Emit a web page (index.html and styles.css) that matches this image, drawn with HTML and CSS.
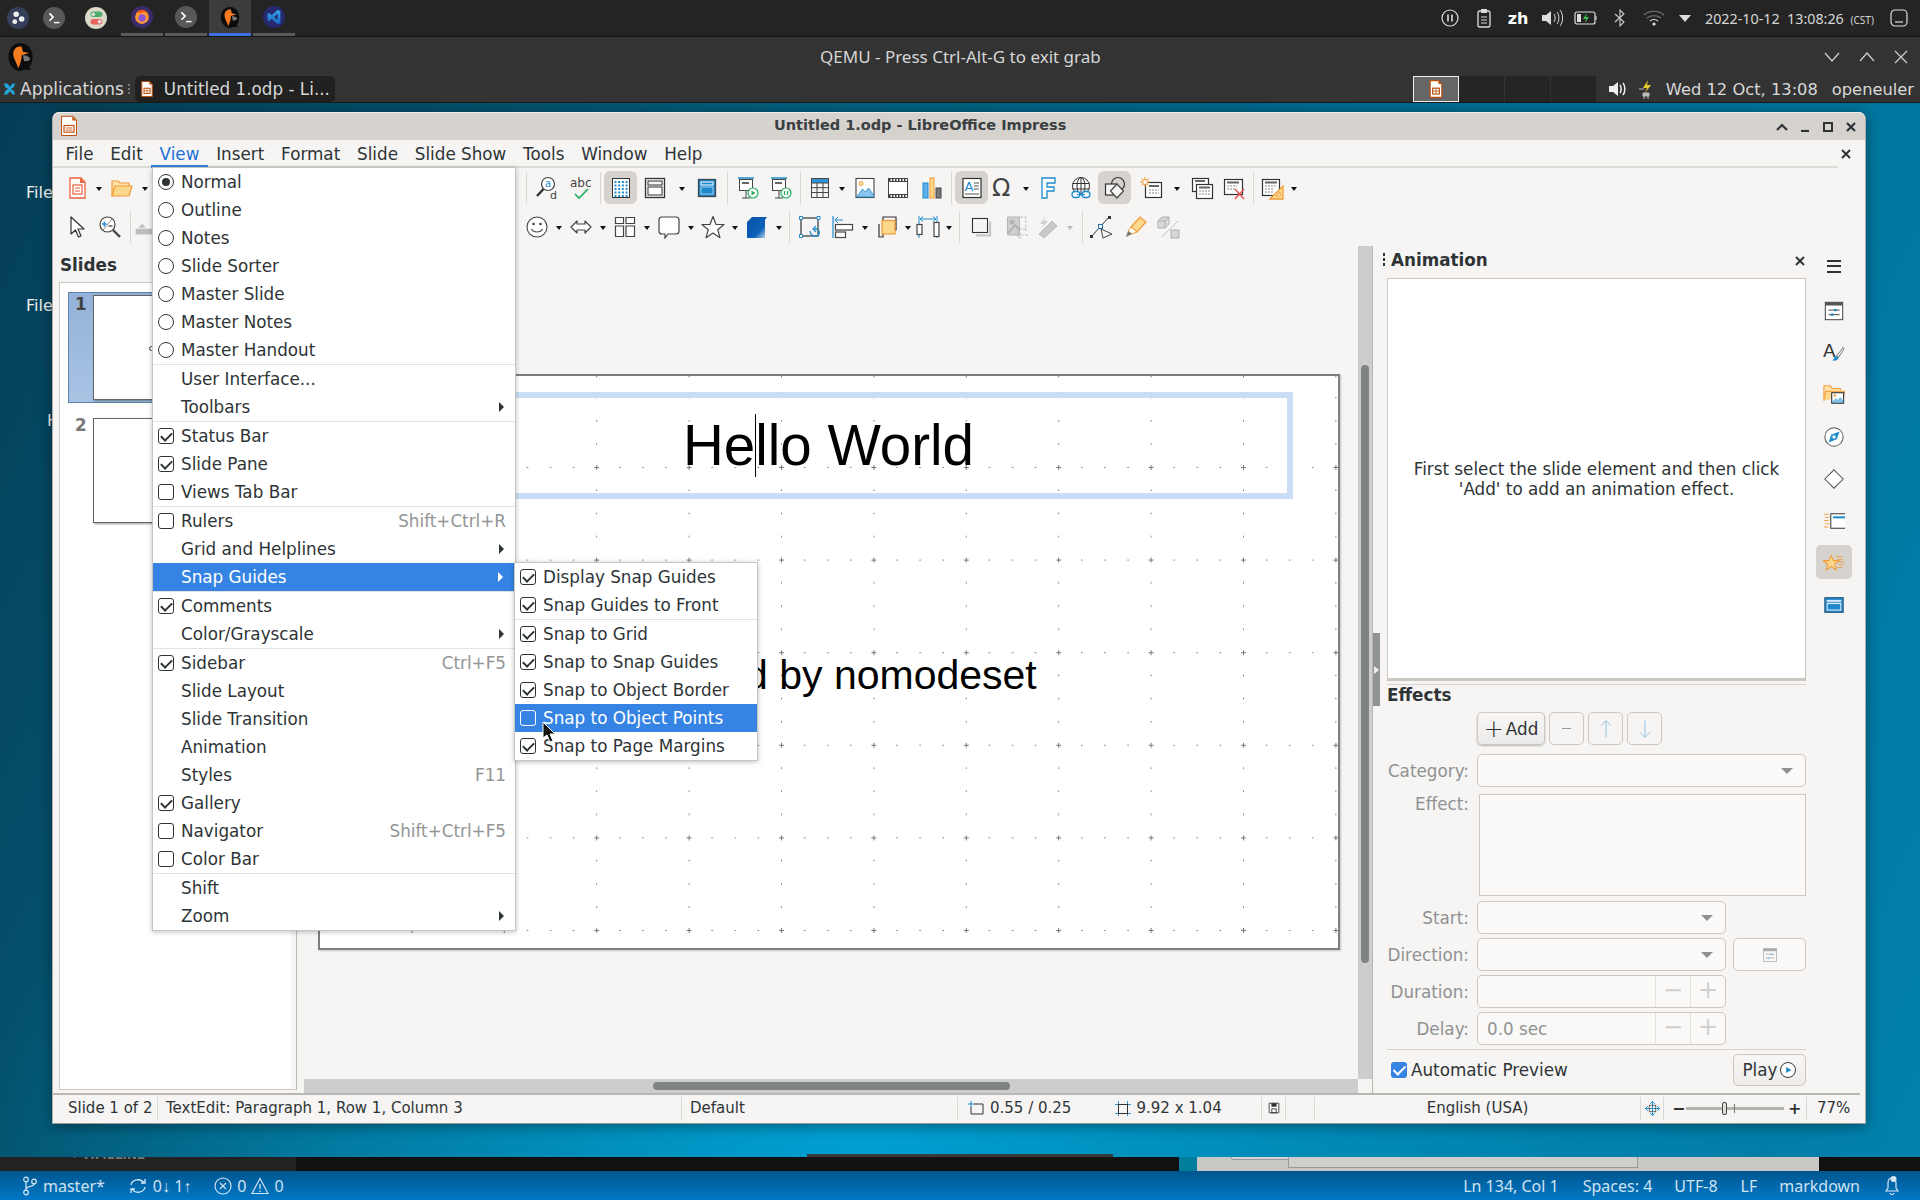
FILE: index.html
```html
<!DOCTYPE html>
<html lang="en">
<head>
<meta charset="utf-8">
<title>Untitled 1.odp - LibreOffice Impress</title>
<link rel="stylesheet" href="styles.css">
</head>
<body>

<!-- icon sprite -->
<svg class="sprite" xmlns="http://www.w3.org/2000/svg">
  <defs>
    <linearGradient id="g3d" x1="0" y1="0" x2="1" y2="1"><stop offset="0" stop-color="#0a4fa8"/><stop offset=".65" stop-color="#0d62b8"/><stop offset="1" stop-color="#cfe3f5"/></linearGradient>
    <linearGradient id="gcode" x1="0" y1="0" x2="0" y2="1"><stop offset="0" stop-color="#3aa3e8"/><stop offset="1" stop-color="#1668c4"/></linearGradient>
  </defs>
  <symbol id="qemu" viewBox="0 0 24 24"><path d="M12 1c6 0 10 5 10 11 0 4-1 7-3 9l2 2h-6l-3 1C6 24 2 18 2 12 2 6 6 1 12 1z" fill="#0c0c0c"/><path d="M13 4C9 3 6 6 6 10c0 4 3 7 4 12 2-4 3-8 3-11l6-2-5-1z" fill="#f47b20"/><path d="M14 11c3 0 5 1 6 3-1 2-3 2-5 2z" fill="#777"/></symbol>
  <symbol id="doc" viewBox="0 0 24 24"><path d="M5 2h10l4 4v16H5z" fill="#fff" stroke="#b8500f" stroke-width="1.400"/><path d="M15 2l4 4h-4z" fill="#b8500f"/><rect x="8" y="11" width="8" height="7" fill="none" stroke="#b8500f" stroke-width="1.400"/><path d="M8 14.500h8M12 11v7" stroke="#b8500f"/></symbol>
  <symbol id="doc-draw" viewBox="0 0 24 24"><path d="M3 1h14l4 4v19H3z" fill="#fff" stroke="#c0500f" stroke-width="1.200"/><path d="M16 1l5 5h-5z" fill="#c0500f"/><rect x="6" y="12" width="12" height="8" fill="none" stroke="#c0500f" stroke-width="1.400"/><path d="M8 15h8M8 17.500h8" stroke="#c0500f"/></symbol>
  <symbol id="new" viewBox="0 0 24 24"><path d="M5 2h11l4 4v16H5z" fill="#fff" stroke="#e8603c" stroke-width="1.300"/><path d="M15 2l5 5h-5z" fill="#e8603c"/><rect x="8" y="9" width="9" height="9" fill="none" stroke="#e8603c" stroke-width="1.200"/><path d="M10 12h5M10 15h5" stroke="#e8603c"/></symbol>
  <symbol id="open" viewBox="0 0 24 24"><path d="M2 20V5h6l2 2h9v3" fill="#fce3ab" stroke="#f19a38" stroke-width="1.200"/><path d="M2 20l3-10h17l-3 10z" fill="#fbd88b" stroke="#f19a38" stroke-width="1.200"/></symbol>
  <symbol id="grid" viewBox="0 0 24 24"><rect x="3.500" y="2.500" width="17" height="19" fill="#fff" stroke="#333"/><path d="M5.500 6h13M5.500 9.500h13M5.500 13h13M5.500 16.500h13M5.500 20h13" stroke="#1e8bcd" stroke-width="2" stroke-dasharray="2 1.700"/></symbol>
  <symbol id="view" viewBox="0 0 24 24"><rect x="2.500" y="2.500" width="19" height="19" fill="none" stroke="#333" stroke-width="1.300"/><rect x="5" y="5" width="14" height="4" fill="none" stroke="#333"/><rect x="5" y="11" width="14" height="8" fill="#fff" stroke="#333"/></symbol>
  <symbol id="master" viewBox="0 0 24 24"><rect x="3.500" y="3.500" width="17" height="17" fill="#1e88cd" stroke="#3a4a55" stroke-width="1.300"/><rect x="6" y="6" width="12" height="3" fill="none" stroke="#fff"/><rect x="6" y="11" width="12" height="7" fill="#1e88cd" stroke="#fff" stroke-width=".6"/></symbol>
  <symbol id="show" viewBox="0 0 24 24"><path d="M2 2h16" stroke="#1e8bcd" stroke-width="1.500"/><rect x="3.500" y="3.500" width="13" height="11" fill="#fff" stroke="#444"/><path d="M6 7h7" stroke="#666" stroke-width="2"/><path d="M10 15v7M6 22h8" stroke="#444"/><circle cx="17" cy="17" r="5" fill="#fff" stroke="#27ae60" stroke-width="1.200"/><path d="M15.500 14.500l4 2.500-4 2.500z" fill="#27ae60"/></symbol>
  <symbol id="show2" viewBox="0 0 24 24"><path d="M2 2h16" stroke="#1e8bcd" stroke-width="1.500"/><rect x="3.500" y="3.500" width="13" height="11" fill="#fff" stroke="#444"/><path d="M6 7h7" stroke="#666" stroke-width="2"/><path d="M10 15v7M6 22h8" stroke="#444"/><circle cx="17" cy="17" r="5" fill="#fff" stroke="#27ae60" stroke-width="1.200"/><path d="M15.500 15v4M18.500 15v4" stroke="#27ae60" stroke-width="1.300"/></symbol>
  <symbol id="table" viewBox="0 0 24 24"><rect x="3" y="2" width="18" height="5" fill="#2d94d8"/><path d="M3.500 2.500h17v19h-17zM3.500 7h17M3.500 11.700h17M3.500 16.500h17M9 7v15M15 7v15" fill="none" stroke="#444"/></symbol>
  <symbol id="image" viewBox="0 0 24 24"><rect x="3" y="2.500" width="18" height="19" fill="#fff" stroke="#444" stroke-width="1.100"/><circle cx="8" cy="7.500" r="2" fill="#fce3ab" stroke="#f19a38"/><path d="M3.500 21l6-8 3 3 3-4 5 7v2z" fill="#8cc3ec" stroke="#1e8bcd" stroke-width=".8"/></symbol>
  <symbol id="video" viewBox="0 0 24 24"><rect x="2.500" y="2.500" width="19" height="19" fill="#fff" stroke="#444"/><path d="M2.500 5.500h19M2.500 18.500h19" stroke="#444"/><path d="M3 4h18M3 20h18" stroke="#444" stroke-width="2" stroke-dasharray="1.500 1.500"/></symbol>
  <symbol id="chart" viewBox="0 0 24 24"><rect x="3" y="7" width="5" height="15" fill="#5eb0e8" stroke="#1e8bcd"/><rect x="10" y="2" width="4" height="20" fill="#fbd88b" stroke="#f19a38"/><rect x="16" y="12" width="5" height="10" fill="#777" stroke="#444"/></symbol>
  <symbol id="fontwork" viewBox="0 0 24 24"><path d="M5 2h13v5h-8v4h7v4h-7v7H5z" fill="#fff" stroke="#1e8bcd" stroke-width="1.300"/></symbol>
  <symbol id="link" viewBox="0 0 24 24"><circle cx="12" cy="10" r="8.500" fill="#fff" stroke="#333"/><ellipse cx="12" cy="10" rx="4" ry="8.500" fill="none" stroke="#333"/><path d="M3.500 7.500h17M3.500 13h17M12 1.500v17" stroke="#333"/><rect x="3" y="15.500" width="8" height="6" rx="3" fill="#fff" stroke="#1e8bcd" stroke-width="1.300"/><rect x="13" y="15.500" width="8" height="6" rx="3" fill="#fff" stroke="#1e8bcd" stroke-width="1.300"/><path d="M8 18.500h8" stroke="#1e8bcd" stroke-width="1.300"/></symbol>
  <symbol id="shapes" viewBox="0 0 24 24"><circle cx="15" cy="8" r="6.500" fill="none" stroke="#333" stroke-width="1.200"/><rect x="2.500" y="8" width="11" height="11" fill="#f6f5f4" stroke="#333" stroke-width="1.200"/><path d="M14 8l6.500 7-6.500 7-6.500-7z" fill="#f6f5f4" stroke="#444" stroke-width="1.200"/></symbol>
  <symbol id="newslide" viewBox="0 0 24 24"><rect x="6.500" y="6.500" width="16" height="15" fill="#fff" stroke="#333" stroke-width="1.200"/><path d="M10 10h10" stroke="#666" stroke-width="2"/><path d="M10 14h10M10 17h10" stroke="#888" stroke-dasharray="2 1"/><path d="M6 1v10M1 6h10M2.500 2.500l7 7M9.500 2.500l-7 7" stroke="#f19a38"/><circle cx="6" cy="6" r="2.500" fill="#fff" stroke="#f19a38"/></symbol>
  <symbol id="dupslide" viewBox="0 0 24 24"><rect x="2.500" y="2.500" width="16" height="13" fill="#fff" stroke="#333" stroke-width="1.200"/><path d="M5 5h10" stroke="#666" stroke-width="2"/><rect x="6.500" y="8.500" width="16" height="14" fill="#fff" stroke="#333" stroke-width="1.200"/><path d="M9 11.500h11" stroke="#666" stroke-width="2"/><path d="M9 15h11M9 18h11" stroke="#888" stroke-dasharray="2 1"/></symbol>
  <symbol id="delslide" viewBox="0 0 24 24"><rect x="2.500" y="3.500" width="18" height="15" fill="#fff" stroke="#333" stroke-width="1.200"/><path d="M5 6.500h12" stroke="#666" stroke-width="2"/><path d="M5 10h10M5 13h8" stroke="#888" stroke-dasharray="2 1"/><path d="M13 13l9 10M22 13l-9 10" stroke="#ea4f4f" stroke-width="1.400"/></symbol>
  <symbol id="layout" viewBox="0 0 24 24"><rect x="2.500" y="3.500" width="17" height="16" fill="#fff" stroke="#333" stroke-width="1.200"/><path d="M5 6.500h12" stroke="#666" stroke-width="2"/><path d="M5 10h12M5 13h8M5 16h8" stroke="#888" stroke-dasharray="2 1"/><path d="M23 10v13H10z" fill="#fbd88b" stroke="#f19a38" stroke-width="1.300"/><path d="M20 16v4h-4z" fill="#fff" stroke="#f19a38"/></symbol>
  <symbol id="arrow" viewBox="0 0 24 24"><path d="M6 2v17l4.500-4 3 7 2.500-1-3-7H19z" fill="#fff" stroke="#333" stroke-width="1.200" stroke-linejoin="round"/></symbol>
  <symbol id="zoom" viewBox="0 0 24 24"><circle cx="9.500" cy="9.500" r="7.500" fill="#fff" stroke="#444" stroke-width="1.200"/><path d="M15 15l7 7" stroke="#444" stroke-width="2.400"/><path d="M4 9h4.500M6.300 6.500v5" stroke="#1e8bcd" stroke-width="1.300"/><path d="M10.500 11h4" stroke="#444" stroke-width="1.300"/><path d="M5 15L14 4" stroke="#888"/></symbol>
  <symbol id="line" viewBox="0 0 24 24"><path d="M2 14h20v7H2zM5 13l5-5 4 5z" fill="#bdbdbd"/></symbol>
  <symbol id="smile" viewBox="0 0 24 24"><circle cx="12" cy="12" r="10" fill="#fff" stroke="#444" stroke-width="1.100"/><circle cx="8.500" cy="9" r="1.300" fill="#444"/><circle cx="15.500" cy="9" r="1.300" fill="#444"/><path d="M6.500 14c2 4 9 4 11 0" fill="none" stroke="#444" stroke-width="1.100"/></symbol>
  <symbol id="dblarrow" viewBox="0 0 24 24"><path d="M2 12l6-6v3h8V6l6 6-6 6v-3H8v3z" fill="#fff" stroke="#444" stroke-width="1.200" stroke-linejoin="round"/></symbol>
  <symbol id="blocks" viewBox="0 0 24 24"><path d="M2.500 2.500h8v6h-8zM13 2.500h8.500v6H13zM2.500 11h8v10.500h-8zM13 11h8.500v10.500H13z" fill="#fff" stroke="#444" stroke-width="1.200"/></symbol>
  <symbol id="callout" viewBox="0 0 24 24"><path d="M5 2h14c2 0 3 1 3 3v11c0 2-1 3-3 3h-8l-3 4v-4H5c-2 0-3-1-3-3V5c0-2 1-3 3-3z" fill="#fff" stroke="#444" stroke-width="1.200"/></symbol>
  <symbol id="star" viewBox="0 0 24 24"><path d="M12 1.500l3 8h8l-6.300 5.200 2.300 8-7-4.700-7 4.700 2.300-8L1 9.500h8z" fill="#fff" stroke="#444" stroke-width="1.200" stroke-linejoin="round"/></symbol>
  <symbol id="solid" viewBox="0 0 24 24"><path d="M7 2h15l-2 3v18H2V7z" fill="url(#g3d)"/></symbol>
  <symbol id="rotate" viewBox="0 0 24 24"><rect x="3" y="3" width="17" height="18" fill="none" stroke="#333" stroke-width="1.200"/><path d="M1.500 1.500h3v3h-3zM19 1.500h3v3h-3zM1.500 19.500h3v3h-3z" fill="#fff" stroke="#1e8bcd"/><path d="M12 16c0 4 4 6 7 5 3-1 3-6 0-7l-3 0" fill="none" stroke="#1e8bcd" stroke-width="1.300"/><path d="M18 11l-3 3 3 3" fill="none" stroke="#1e8bcd" stroke-width="1.200"/></symbol>
  <symbol id="align" viewBox="0 0 24 24"><path d="M3 1v22" stroke="#1e8bcd" stroke-width="1.200"/><path d="M5 5h8M5 5l3-3M5 5l3 3" fill="none" stroke="#1e8bcd"/><rect x="5.500" y="9.500" width="17" height="5.500" fill="#fff" stroke="#444" stroke-width="1.200"/><rect x="5.500" y="17" width="10" height="5.500" fill="#fff" stroke="#444" stroke-width="1.200"/></symbol>
  <symbol id="arrange" viewBox="0 0 24 24"><path d="M7 5V2h13v13h-3M7 19v3h-4V9" fill="none" stroke="#333" stroke-width="1.200"/><rect x="6" y="5.500" width="13" height="13.500" fill="#fbd88b" stroke="#f19a38" stroke-width="1.200"/></symbol>
  <symbol id="distrib" viewBox="0 0 24 24"><path d="M3 1v22M21 1v22" stroke="#1e8bcd"/><path d="M4 4h16M4 4l3-2.500M4 4l3 2.500M20 4l-3-2.500M20 4l-3 2.500" fill="none" stroke="#1e8bcd"/><rect x="1" y="9.500" width="5" height="10" fill="#fff" stroke="#444" stroke-width="1.200"/><rect x="18" y="7.500" width="5" height="14" fill="#fff" stroke="#444" stroke-width="1.200"/></symbol>
  <symbol id="shadow" viewBox="0 0 24 24"><path d="M7 20.500h14v-14" fill="none" stroke="#c4c4c4" stroke-width="2.200"/><rect x="3.500" y="3.500" width="15" height="14" fill="#f6f5f4" stroke="#333" stroke-width="1.100"/></symbol>
  <symbol id="crop" viewBox="0 0 24 24"><path d="M2.500 2h12v18h-12z" fill="#cfcfcf" stroke="#b5b5b5"/><circle cx="7" cy="7" r="2.500" fill="#b5b5b5"/><path d="M3 18l7-8 5 5" fill="none" stroke="#aaa" stroke-width="1.500"/><path d="M15 2h6v14M21 14h-8v8M11 20h12M15 24v-6" fill="none" stroke="#bbb" stroke-dasharray="3 1.500"/></symbol>
  <symbol id="brush" viewBox="0 0 24 24"><path d="M3 19L16 6l5 5-13 12z" fill="#c9c9c9" stroke="#bbb"/><path d="M9 2L4 9h4L6 13l6-7H8z" fill="#d0d0d0"/></symbol>
  <symbol id="points" viewBox="0 0 24 24"><path d="M2 22L20 2" stroke="#333"/><rect x="19" y="1" width="3" height="3" fill="#333"/><rect x="1" y="20" width="3" height="3" fill="#333"/><rect x="9.500" y="9.500" width="4" height="4" fill="#fff" stroke="#1e6fb8"/><path d="M12 14l2 9 9-4z" fill="#f6f5f4" stroke="#444"/></symbol>
  <symbol id="marker" viewBox="0 0 24 24"><path d="M8 12L17 2l6 5-9 10z" fill="#fbd88b" stroke="#f19a38" stroke-width="1.200"/><path d="M8 12l6 5-5 2-4-3z" fill="#fff" stroke="#f19a38"/><path d="M5 16l4 3-6 3z" fill="#777"/></symbol>
  <symbol id="toggle3d" viewBox="0 0 24 24"><path d="M2 6l4-4h7v7l-4 4H2z" fill="#d9d9d9" stroke="#b0b0b0"/><path d="M2 6h7v7M9 6l4-4" fill="none" stroke="#b0b0b0"/><path d="M6 22L22 6" stroke="#c0c0c0"/><rect x="15" y="15" width="8" height="8" fill="#d5d5d5" stroke="#b0b0b0"/></symbol>
  <symbol id="props" viewBox="0 0 24 24"><rect x="2.500" y="2.500" width="19" height="19" fill="#fff" stroke="#333"/><rect x="2.500" y="2.500" width="19" height="3.500" fill="#555"/><path d="M6 11h12M6 16h12" stroke="#333"/><circle cx="13.500" cy="11" r="1.500" fill="#1e8bcd"/><circle cx="10" cy="16" r="1.500" fill="#1e8bcd"/></symbol>
  <symbol id="gallery" viewBox="0 0 24 24"><path d="M1 18V2h7l2 3h9v2" fill="#fce3ab" stroke="#f19a38" stroke-width="1.100"/><path d="M1 18l2-10h21l-2 6" fill="#fbd88b" stroke="#f19a38" stroke-width="1.100"/><rect x="9.500" y="9.500" width="13" height="11.500" fill="#fff" stroke="#333" stroke-width="1.200"/><circle cx="13" cy="12.500" r="1.300" fill="#f19a38"/><path d="M10 20l4-4 2 2 3-3 3 4v1z" fill="#8cc3ec" stroke="#1e8bcd" stroke-width=".6"/></symbol>
  <symbol id="navi" viewBox="0 0 24 24"><circle cx="12" cy="12" r="10" fill="#fff" stroke="#555" stroke-width="1.100"/><path d="M18 6l-9 3.500-3 8.500 9-3.500z" fill="#1e8bcd"/><circle cx="12" cy="12" r="1.800" fill="#fff"/></symbol>
  <symbol id="diamond" viewBox="0 0 24 24"><path d="M12 2l10 10-10 10L2 12z" fill="#fff" stroke="#555" stroke-width="1.100"/></symbol>
  <symbol id="transit" viewBox="0 0 24 24"><path d="M1 4.500h5M2 8h5M1 11.500h5M2 15h5M1 18.500h5" stroke="#f19a38"/><path d="M24 4H8.500v16H24" fill="#fff" stroke="#333" stroke-width="1.100"/><path d="M11 8h13" stroke="#1e8bcd" stroke-width="2.200"/></symbol>
  <symbol id="anim" viewBox="0 0 24 24"><path d="M9 5l2.500 5.500h6l-4.700 4 1.800 6L9 17l-5.600 3.500 1.800-6-4.700-4h6z" fill="#fbd88b" stroke="#f19a38" stroke-width="1.100"/><path d="M13 6h8M15 9h7M17 12h6M17 15h6M15 18h6" stroke="#f19a38" stroke-width=".9"/></symbol>
  <symbol id="pages" viewBox="0 0 24 24"><rect x="2" y="4" width="20" height="16" fill="#1e88cd" stroke="#2b5a7d" stroke-width="1.200"/><path d="M4 7h16M4 8.500h16" stroke="#fff"/><rect x="4.500" y="10.500" width="15" height="7" fill="none" stroke="#fff"/></symbol>
  <symbol id="opts" viewBox="0 0 24 24"><rect x="3.500" y="3.500" width="17" height="17" fill="#faf9f8" stroke="#aaa"/><rect x="3.500" y="3.500" width="17" height="3.500" fill="#aaa"/><path d="M6 11h12M6 16h12" stroke="#aaa"/><circle cx="14" cy="11" r="1.500" fill="#8cc3ec"/><circle cx="10" cy="16" r="1.500" fill="#8cc3ec"/></symbol>
  <symbol id="up" viewBox="0 0 24 24"><path d="M12 2v20M6 8l6-6 6 6" fill="none" stroke="#7cbbe6"/></symbol>
  <symbol id="down" viewBox="0 0 24 24"><path d="M12 2v20M6 16l6 6 6-6" fill="none" stroke="#7cbbe6"/></symbol>
  <symbol id="play" viewBox="0 0 24 24"><circle cx="12" cy="12" r="10" fill="#fff" stroke="#333" stroke-width="1.300"/><path d="M9.500 8l7 4-7 4z" fill="#1e8bcd"/></symbol>
  <symbol id="pos" viewBox="0 0 16 16"><path d="M3 1v6M0 4h6" stroke="#1e8bcd"/><path d="M3 7v7h12V4H6" fill="none" stroke="#333"/></symbol>
  <symbol id="size" viewBox="0 0 16 16"><path d="M0 4.500h16M0 13.500h16M3.500 1v15M12.500 1v15" stroke="#1e8bcd" stroke-width=".9"/><rect x="3.500" y="4.500" width="9" height="9" fill="none" stroke="#333"/></symbol>
  <symbol id="save" viewBox="0 0 16 16"><path d="M2.500 2.500h11v11h-11z" fill="#fff" stroke="#333"/><rect x="5" y="2.500" width="6" height="4" fill="#333"/><rect x="5.500" y="9" width="5" height="4.500" fill="none" stroke="#333"/></symbol>
  <symbol id="fit" viewBox="0 0 16 16"><path d="M8 .5v15M.5 8h15M8 .5L5.500 3M8 .5L10.500 3M8 15.500L5.500 13M8 15.500l2.500-2.500M.5 8L3 5.500M.5 8L3 10.500M15.500 8L13 5.500M15.500 8L13 10.500" fill="none" stroke="#1e8bcd"/><rect x="4.500" y="4.500" width="7" height="7" fill="none" stroke="#333" stroke-width=".7"/></symbol>
</svg>

<!-- host panel -->
<div class="hostbar">
  <div class="launcher"><svg class="round" viewBox="0 0 24 24"><circle cx="12" cy="12" r="12" fill="#36405a"/><circle cx="10" cy="8" r="3" fill="#eee"/><circle cx="16" cy="13" r="3" fill="#eee"/><circle cx="8.500" cy="16" r="2.600" fill="#eee"/></svg></div>
  <div class="launcher"><svg class="round" viewBox="0 0 24 24"><circle cx="12" cy="12" r="12" fill="#585858"/><path d="M7 7l4 4-4 4" fill="none" stroke="#fff" stroke-width="1.800"/><path d="M12 17h6" stroke="#fff" stroke-width="1.500"/></svg></div>
  <div class="launcher wide"><svg class="round" viewBox="0 0 24 24"><circle cx="12" cy="12" r="12" fill="#ddd9c9"/><rect x="6" y="5" width="13" height="6" rx="3" fill="#4fae6d"/><circle cx="9" cy="8" r="2" fill="#ddd"/><rect x="6" y="13" width="13" height="6" rx="3" fill="#e5645c"/><circle cx="16" cy="16" r="2" fill="#ddd"/></svg></div>
  <div class="tab"><svg class="round" viewBox="0 0 24 24"><circle cx="12" cy="12" r="12" fill="#3a2c6a"/><circle cx="12" cy="12" r="7.500" fill="#ff9a2e"/><circle cx="12" cy="13" r="4" fill="#8d55d8"/><path d="M6 7c3-4 10-4 12 1-3-2-5-2-7 0z" fill="#f3541f"/></svg></div>
  <div class="tab"><svg class="round" viewBox="0 0 24 24"><circle cx="12" cy="12" r="12" fill="#585858"/><path d="M7 7l4 4-4 4" fill="none" stroke="#fff" stroke-width="1.800"/><path d="M12 17h6" stroke="#fff" stroke-width="1.500"/></svg></div>
  <div class="tab active"><svg class="round"><use href="#qemu"/></svg></div>
  <div class="tab"><svg class="round" viewBox="0 0 24 24"><circle cx="12" cy="12" r="12" fill="#27296e"/><path d="M16 4l3 1.500v13L16 20 9.500 14l-3 2.500-1.500-1V8.500l1.500-1 3 2.500zM16 8.500L12 12l4 3.500z" fill="url(#gcode)" fill-rule="evenodd"/></svg></div>
  <div class="tray">
    <span class="tray-item"><svg width="18" height="18" viewBox="0 0 18 18"><circle cx="9" cy="9" r="8" fill="none" stroke="#ddd" stroke-width="1.200"/><path d="M7 5.500v7M11 5.500v7" stroke="#ddd" stroke-width="1.600"/></svg></span>
    <span class="tray-item"><svg width="18" height="20" viewBox="0 0 18 20"><rect x="3" y="3" width="12" height="16" rx="2" fill="none" stroke="#ddd" stroke-width="1.300"/><rect x="6" y="1" width="6" height="4" fill="#ddd"/><path d="M6 9h6M6 12h6M6 15h6" stroke="#ddd"/></svg></span>
    <span class="tray-item zh">zh</span>
    <span class="tray-item"><svg width="22" height="18" viewBox="0 0 22 18"><path d="M1 6h4l5-4v14l-5-4H1z" fill="#ddd"/><path d="M13 5c1.500 2 1.500 6 0 8M16 3c2.500 3 2.500 9 0 12M19 1c3.500 4 3.500 12 0 16" fill="none" stroke="#ddd"/></svg></span>
    <span class="tray-item"><svg width="24" height="14" viewBox="0 0 24 14"><rect x="1" y="1" width="20" height="12" rx="2" fill="none" stroke="#ddd" stroke-width="1.200"/><path d="M22 5v4" stroke="#ddd"/><rect x="3" y="3" width="4" height="8" fill="#ddd"/><path d="M13 2l-4 6h3l-1 4 4-6h-3z" fill="#3fc24c"/></svg></span>
    <span class="tray-item"><svg width="12" height="20" viewBox="0 0 12 20"><path d="M1 6l9 8-4 4V2l4 4-9 8" fill="none" stroke="#ccc" stroke-width="1.100"/></svg></span>
    <span class="tray-item"><svg width="22" height="18" viewBox="0 0 22 18"><path d="M1 6c5-5 15-5 20 0M4 9c4-3 10-3 14 0" fill="none" stroke="#777" stroke-width="1.200"/><path d="M7 12c2-2 6-2 8 0" fill="none" stroke="#ddd" stroke-width="1.200"/><circle cx="11" cy="15" r="1.600" fill="#ddd"/></svg></span>
    <span class="tray-item caret"><i></i></span>
    <span class="clock">2022-10-12 &nbsp;13:08:26 <small>(CST)</small></span>
    <svg class="notif" width="18" height="18" viewBox="0 0 18 18"><rect x="1" y="1" width="16" height="16" rx="4" fill="none" stroke="#ddd" stroke-width="1.200"/><path d="M5 13h8" stroke="#ddd" stroke-width="1.200"/></svg>
  </div>
</div>

<!-- qemu window title -->
<div class="qemubar">
  <svg class="qemu-logo"><use href="#qemu"/></svg>
  <span class="qemu-title">QEMU - Press Ctrl-Alt-G to exit grab</span>
  <div class="qemu-btns">
    <svg width="16" height="12" viewBox="0 0 16 12"><path d="M1 2l7 8 7-8" fill="none" stroke="#d0d0d0" stroke-width="1.200"/></svg>
    <svg width="16" height="12" viewBox="0 0 16 12"><path d="M1 10l7-8 7 8" fill="none" stroke="#d0d0d0" stroke-width="1.200"/></svg>
    <svg width="14" height="14" viewBox="0 0 14 14"><path d="M1 1l12 12M13 1L1 13" stroke="#d0d0d0" stroke-width="1.200"/></svg>
  </div>
</div>

<!-- guest panel -->
<div class="guestbar">
  <span class="apps"><svg width="13" height="14" viewBox="0 0 13 14"><path d="M1 1l4 1 2 3 2-3 3-1-1 4-3 2 3 2 1 4-3-1-2-3-2 3-4 1 1-4 3-2-3-2z" fill="#22a4dc"/></svg>Applications</span>
  <span class="grip"><i></i></span>
  <span class="task"><svg width="18" height="22"><use href="#doc"/></svg>Untitled 1.odp - Li...</span>
  <div class="pager"><span class="cell current"><svg width="20" height="22"><use href="#doc"/></svg></span><span class="cell"></span><span class="cell"></span><span class="cell"></span></div>
  <svg class="gtray" width="18" height="18" viewBox="0 0 18 18"><path d="M1 6h4l5-4v14l-5-4H1z" fill="#eee"/><path d="M12 5c1.500 2 1.500 6 0 8M15 3c2.500 3 2.500 9 0 12" fill="none" stroke="#eee" stroke-width="1.500"/></svg>
  <svg class="gtray" width="18" height="20" viewBox="0 0 18 20"><path d="M11 1L6 9h4l-2 5 6-8h-4z" fill="#e8c92c"/><path d="M2 10h5M6 14h6v3H6zM7 17v3M11 17v3" stroke="#bbb" fill="#bbb"/></svg>
  <span class="gclock">Wed 12 Oct, 13:08</span>
  <span class="guser">openeuler</span>
</div>

<!-- guest desktop -->
<div class="desktop">
  <span class="deskicon first">File</span>
  <span class="deskicon second">File</span>
  <span class="deskicon third">H</span>

  <div class="window">
    <div class="titlebar">
      <svg class="title-icon" width="20" height="25"><use href="#doc-draw"/></svg>
      <span class="title-text">Untitled 1.odp - LibreOffice Impress</span>
      <div class="title-btns">
        <svg width="12" height="10" viewBox="0 0 12 10"><path d="M1 8l5-5 5 5" fill="none" stroke="#2e3436" stroke-width="2.200"/></svg>
        <svg width="12" height="10" viewBox="0 0 12 10"><path d="M2 9h8" stroke="#2e3436" stroke-width="2.200"/></svg>
        <svg width="12" height="12" viewBox="0 0 12 12"><rect x="2" y="2" width="8" height="8" fill="none" stroke="#2e3436" stroke-width="2"/></svg>
        <svg width="12" height="12" viewBox="0 0 12 12"><path d="M2 2l8 8M10 2l-8 8" stroke="#2e3436" stroke-width="2.200"/></svg>
      </div>
    </div>

    <div class="menubar">
      <span class="mitem">File</span><span class="mitem">Edit</span><span class="mitem open-item">View</span><span class="mitem">Insert</span><span class="mitem">Format</span><span class="mitem">Slide</span><span class="mitem">Slide Show</span><span class="mitem">Tools</span><span class="mitem">Window</span><span class="mitem">Help</span>
      <svg class="doc-close" width="10" height="10" viewBox="0 0 10 10"><path d="M1 1l8 8M9 1L1 9" stroke="#2e3436" stroke-width="2"/></svg>
    </div>

    <div class="toolbar">
      <span class="tb"><svg><use href="#new"/></svg></span><span class="dd"></span>
      <span class="tb w34"><svg><use href="#open"/></svg></span><span class="dd"></span>
      <span class="hidden-a"></span>
      <span class="sep w8"></span>
      <span class="tb"><svg viewBox="0 0 24 24"><circle cx="13" cy="8" r="6.500" fill="#fff" stroke="#444" stroke-width="1.200"/><path d="M8.500 13L2 20" stroke="#333" stroke-width="2.400"/><text x="10" y="11" class="ic" font-size="10" fill="#1e8bcd">a</text><text x="15" y="23" class="ic" font-size="11" fill="#444">d</text></svg></span>
      <span class="tb"><svg viewBox="0 0 24 24"><text x="2" y="11" class="ic" font-size="12" fill="#444">abc</text><path d="M7 18l4 4 9-9" fill="none" stroke="#27ae60" stroke-width="1.700"/></svg></span>
      <span class="sep w8"></span>
      <span class="tb on"><svg><use href="#grid"/></svg></span>
      <span class="tb w36"><svg><use href="#view"/></svg></span><span class="dd w17"></span>
      <span class="tb"><svg><use href="#master"/></svg></span>
      <span class="sep w8"></span>
      <span class="tb"><svg><use href="#show"/></svg></span>
      <span class="tb"><svg><use href="#show2"/></svg></span>
      <span class="sep w6"></span>
      <span class="tb"><svg><use href="#table"/></svg></span><span class="dd"></span>
      <span class="tb"><svg><use href="#image"/></svg></span>
      <span class="tb w34"><svg><use href="#video"/></svg></span>
      <span class="tb"><svg><use href="#chart"/></svg></span>
      <span class="sep w7"></span>
      <span class="tb on"><svg viewBox="0 0 24 24"><rect x="3" y="2.500" width="18" height="19" fill="#fff" stroke="#333" stroke-width="1.200"/><text x="4.500" y="15" class="ic" font-size="13" fill="#1e8bcd">A</text><path d="M14 7h5M14 10h5M14 13h5M5 18h14" stroke="#555"/></svg></span>
      <span class="tb w29"><svg viewBox="0 0 24 24"><text x="1" y="20" class="ic" font-size="24" fill="#444">Ω</text></svg></span><span class="dd w17"></span>
      <span class="tb w30"><svg><use href="#fontwork"/></svg></span>
      <span class="tb w34"><svg><use href="#link"/></svg></span>
      <span class="tb on"><svg><use href="#shapes"/></svg></span>
      <span class="tb w40"><svg><use href="#newslide"/></svg></span><span class="dd"></span>
      <span class="tb w38"><svg><use href="#dupslide"/></svg></span>
      <span class="tb w26"><svg><use href="#delslide"/></svg></span>
      <span class="sep w12"></span>
      <span class="tb w26"><svg><use href="#layout"/></svg></span><span class="dd w18"></span>
    </div>
    <div class="toolbar">
      <span class="tb"><svg><use href="#arrow"/></svg></span>
      <span class="tb"><svg><use href="#zoom"/></svg></span>
      <span class="sep w8"></span>
      <span class="tb w20"><svg><use href="#line"/></svg></span>
      <span class="hidden-b"></span>
      <span class="tb w32"><svg><use href="#smile"/></svg></span><span class="dd"></span>
      <span class="tb w32"><svg><use href="#dblarrow"/></svg></span><span class="dd"></span>
      <span class="tb w32"><svg><use href="#blocks"/></svg></span><span class="dd"></span>
      <span class="tb w32"><svg><use href="#callout"/></svg></span><span class="dd"></span>
      <span class="tb w32"><svg><use href="#star"/></svg></span><span class="dd"></span>
      <span class="tb w32"><svg><use href="#solid"/></svg></span><span class="dd"></span>
      <span class="sep w8"></span>
      <span class="tb"><svg><use href="#rotate"/></svg></span>
      <span class="tb w31"><svg><use href="#align"/></svg></span><span class="dd w16"></span>
      <span class="tb w29"><svg><use href="#arrange"/></svg></span><span class="dd"></span>
      <span class="tb w28"><svg><use href="#distrib"/></svg></span><span class="dd w14"></span>
      <span class="sep w6"></span>
      <span class="tb w38"><svg><use href="#shadow"/></svg></span>
      <span class="tb w34"><svg><use href="#crop"/></svg></span>
      <span class="tb w28"><svg><use href="#brush"/></svg></span><span class="dd w16 off"></span>
      <span class="sep w8"></span>
      <span class="tb w30"><svg><use href="#points"/></svg></span>
      <span class="tb w38"><svg><use href="#marker"/></svg></span>
      <span class="tb w28"><svg><use href="#toggle3d"/></svg></span>
    </div>

    <div class="workspace">
      <aside class="slidepane">
        <h3 class="pane-head">Slides</h3>
        <div class="slidelist">
          <div class="thumb-row selected"><b>1</b><div class="thumb"><i class="handle"></i></div></div>
          <div class="thumb-row"><b>2</b><div class="thumb"></div></div>
        </div>
      </aside>

      <main class="editor">
        <div class="canvas">
          <div class="slide">
            <svg class="gridlayer" width="1018" height="571">
              <defs>
                <pattern id="dots" x="-3" y="-3.600" width="92.400" height="92.600" patternUnits="userSpaceOnUse">
                  <path d="M0 2.500h5M2.500 0v5" stroke="#777" stroke-width="1"/>
                  <path d="M25 2.500h1.200M48.100 2.500h1.200M71.200 2.500h1.200M2 25.300h1M2 48.400h1M2 71.600h1" stroke="#555" stroke-width="1.200"/>
                </pattern>
              </defs>
              <rect width="1018" height="571" fill="url(#dots)"/>
            </svg>
            <div class="titleframe"></div>
            <div class="slide-title">Hello World</div>
            <i class="caret-line"></i>
            <div class="slide-body">d by nomodeset</div>
          </div>
        </div>
        <div class="hscroll"><span class="hthumb"></span></div>
      </main>

      <div class="vscroll"><span class="vthumb"></span></div>

      <aside class="sidebar">
        <span class="sash"><i></i></span>
        <div class="deck">
          <div class="deck-head"><span class="grip-dots"><i></i><i></i><i></i></span><b>Animation</b><svg width="10" height="10" viewBox="0 0 10 10"><path d="M1 1l8 8M9 1L1 9" stroke="#2e3436" stroke-width="2"/></svg></div>
          <div class="anim-list"><p>First select the slide element and then click<br>'Add' to add an animation effect.</p></div>
          <div class="rule"></div>
          <h4 class="effects">Effects</h4>
          <div class="ctrl-row btn-row">
            <span class="btn add"><span class="plus">+</span>Add</span>
            <span class="btn small"><span class="minus"></span></span>
            <span class="btn small"><svg width="20" height="20"><use href="#up"/></svg></span>
            <span class="btn small"><svg width="20" height="20"><use href="#down"/></svg></span>
          </div>
          <div class="ctrl-row cat-row"><label>Category:</label><span class="combo full"><i></i></span></div>
          <div class="ctrl-row eff-row"><label>Effect:</label><span class="listbox"></span></div>
          <div class="ctrl-row start-row"><label>Start:</label><span class="combo"><i></i></span></div>
          <div class="ctrl-row dir-row"><label>Direction:</label><span class="combo"><i></i></span><span class="btn opts"><svg width="18" height="18"><use href="#opts"/></svg></span></div>
          <div class="ctrl-row dur-row"><label>Duration:</label><span class="spin"><span class="spin-val"></span><span class="spin-btn">−</span><span class="spin-btn">+</span></span></div>
          <div class="ctrl-row dur-row"><label>Delay:</label><span class="spin"><span class="spin-val">0.0 sec</span><span class="spin-btn">−</span><span class="spin-btn">+</span></span></div>
          <div class="rule foot-rule"></div>
          <div class="deck-foot"><span class="tick"></span><span class="foot-label">Automatic Preview</span><span class="btn playbtn">Play<svg width="18" height="18"><use href="#play"/></svg></span></div>
        </div>
        <div class="tabbar">
          <span class="tab-item burger"><i></i><i></i><i></i></span>
          <span class="tab-item"><svg><use href="#props"/></svg></span>
          <span class="tab-item"><svg viewBox="0 0 24 24"><text x="0" y="16" class="ic" font-size="20" fill="#333">A</text><path d="M22 6l-7 9 2 1.500 6-9z" fill="#fff" stroke="#444" stroke-width=".8"/><path d="M14 15c-2 1-1 4-4 5 3 1 7 0 7-3z" fill="#1e8bcd"/></svg></span>
          <span class="tab-item"><svg><use href="#gallery"/></svg></span>
          <span class="tab-item"><svg><use href="#navi"/></svg></span>
          <span class="tab-item"><svg><use href="#diamond"/></svg></span>
          <span class="tab-item"><svg><use href="#transit"/></svg></span>
          <span class="tab-item current"><svg><use href="#anim"/></svg></span>
          <span class="tab-item"><svg><use href="#pages"/></svg></span>
        </div>
      </aside>
    </div>

    <footer class="statusbar">
      <span class="st st1">Slide 1 of 2</span>
      <span class="st st2">TextEdit: Paragraph 1, Row 1, Column 3</span>
      <span class="st st3">Default</span>
      <span class="st st4"><span class="geo"><svg width="16" height="16"><use href="#pos"/></svg>0.55 / 0.25</span><span class="geo"><svg width="16" height="16"><use href="#size"/></svg>9.92 x 1.04</span></span>
      <span class="st st5"><svg width="14" height="14"><use href="#save"/></svg></span>
      <span class="st st6"></span>
      <span class="st st7">English (USA)</span>
      <span class="st st8"><svg width="15" height="15"><use href="#fit"/></svg></span>
      <span class="st st9"><span class="zm">−</span><span class="slider"><i class="notch"></i><i class="knob"></i></span><span class="zm">+</span></span>
      <span class="st st10">77%</span>
    </footer>
  </div>
</div>

<!-- strip of the editor behind the vm -->
<div class="strip">
  <div class="strip-side"><span class="timeline">› TIMELINE</span></div>
  <div class="strip-dark"></div>
  <div class="strip-teal"></div>
  <div class="strip-shot"><i class="shot-a"></i><i class="shot-b"></i></div>
  <div class="strip-end"></div>
</div>
<i class="strip-tab"></i>

<footer class="codebar">
  <span class="cb-left">
    <svg width="16" height="20" viewBox="0 0 16 20"><circle cx="4" cy="3.500" r="2.300" fill="none" stroke="#d6e8f5" stroke-width="1.200"/><circle cx="4" cy="16.500" r="2.300" fill="none" stroke="#d6e8f5" stroke-width="1.200"/><circle cx="12" cy="5.500" r="2.300" fill="none" stroke="#d6e8f5" stroke-width="1.200"/><path d="M4 6v8M4 13c0-3 8-2 8-5" fill="none" stroke="#d6e8f5" stroke-width="1.200"/></svg>
    <span class="cb-branch">master*</span>
    <svg width="20" height="20" viewBox="0 0 20 20"><path d="M3 9c1-6 10-7 13-2M17 11c-1 6-10 7-13 2" fill="none" stroke="#d6e8f5" stroke-width="1.300"/><path d="M13 7h4V3M7 13H3v4" fill="none" stroke="#d6e8f5" stroke-width="1.300"/></svg>
    <span class="cb-sync">0↓ 1↑</span>
    <svg width="18" height="18" viewBox="0 0 18 18"><circle cx="9" cy="9" r="8" fill="none" stroke="#d6e8f5" stroke-width="1.100"/><path d="M6 6l6 6M12 6l-6 6" stroke="#d6e8f5" stroke-width="1.100"/></svg>
    <span>0</span>
    <svg width="18" height="18" viewBox="0 0 18 18"><path d="M9 1.500l8 15H1z" fill="none" stroke="#d6e8f5" stroke-width="1.100"/><path d="M9 7v5M9 13.500v1.500" stroke="#d6e8f5" stroke-width="1.300"/></svg>
    <span>0</span>
  </span>
  <span class="cb-right">
    <span class="cb-ln">Ln 134, Col 1</span>
    <span class="cb-sp">Spaces: 4</span>
    <span class="cb-enc">UTF-8</span>
    <span class="cb-eol">LF</span>
    <span class="cb-lang">markdown</span>
    <svg width="16" height="22" viewBox="0 0 16 22"><path d="M8 3c-3 0-4 2-4 5v5l-2 3h12l-2-3V8c0-3-1-5-4-5zM6 18c0 2 4 2 4 0" fill="none" stroke="#d6e8f5" stroke-width="1.200"/><circle cx="9.500" cy="4" r="3" fill="#d6e8f5"/></svg>
  </span>
</footer>

<!-- open menus -->
<div class="menu viewmenu">
  <div class="row"><span class="radio on"></span>Normal</div>
  <div class="row"><span class="radio"></span>Outline</div>
  <div class="row"><span class="radio"></span>Notes</div>
  <div class="row"><span class="radio"></span>Slide Sorter</div>
  <div class="row"><span class="radio"></span>Master Slide</div>
  <div class="row"><span class="radio"></span>Master Notes</div>
  <div class="row"><span class="radio"></span>Master Handout</div>
  <hr>
  <div class="row"><span class="nomark"></span>User Interface...</div>
  <div class="row"><span class="nomark"></span>Toolbars<i class="sub"></i></div>
  <hr>
  <div class="row"><span class="check on"></span>Status Bar</div>
  <div class="row"><span class="check on"></span>Slide Pane</div>
  <div class="row"><span class="check"></span>Views Tab Bar</div>
  <hr>
  <div class="row"><span class="check"></span>Rulers<em>Shift+Ctrl+R</em></div>
  <div class="row"><span class="nomark"></span>Grid and Helplines<i class="sub"></i></div>
  <div class="row hot"><span class="nomark"></span>Snap Guides<i class="sub"></i></div>
  <hr>
  <div class="row"><span class="check on"></span>Comments</div>
  <div class="row"><span class="nomark"></span>Color/Grayscale<i class="sub"></i></div>
  <hr>
  <div class="row"><span class="check on"></span>Sidebar<em>Ctrl+F5</em></div>
  <div class="row"><span class="nomark"></span>Slide Layout</div>
  <div class="row"><span class="nomark"></span>Slide Transition</div>
  <div class="row"><span class="nomark"></span>Animation</div>
  <div class="row"><span class="nomark"></span>Styles<em>F11</em></div>
  <div class="row"><span class="check on"></span>Gallery</div>
  <div class="row"><span class="check"></span>Navigator<em>Shift+Ctrl+F5</em></div>
  <div class="row"><span class="check"></span>Color Bar</div>
  <hr>
  <div class="row"><span class="nomark"></span>Shift</div>
  <div class="row"><span class="nomark"></span>Zoom<i class="sub"></i></div>
</div>

<div class="menu snapmenu">
  <div class="row"><span class="check on"></span>Display Snap Guides</div>
  <div class="row"><span class="check on"></span>Snap Guides to Front</div>
  <hr>
  <div class="row"><span class="check on"></span>Snap to Grid</div>
  <div class="row"><span class="check on"></span>Snap to Snap Guides</div>
  <div class="row"><span class="check on"></span>Snap to Object Border</div>
  <div class="row hot"><span class="check"></span>Snap to Object Points</div>
  <div class="row"><span class="check on"></span>Snap to Page Margins</div>
</div>

<svg class="pointer" width="14" height="22" viewBox="0 0 14 22"><path d="M1 1v16l4-3 3 7 3-1-3-7h5z" fill="#111" stroke="#fff" stroke-width="1"/></svg>

</body>
</html>
```

FILE: styles.css
```css
* {box-sizing:border-box;}
html, body {margin:0;padding:0;}
body {position:relative;width:1920px;height:1200px;overflow:hidden;display:flex;flex-direction:column;
	font-family:"DejaVu Sans",sans-serif;font-size:16.8px;color:#2e3436;background:#111;}
.sprite {position:absolute;width:0;height:0;overflow:hidden;}
.ic {font-family:"DejaVu Sans",sans-serif;}

/* host panel */
.hostbar {height:37px;flex:none;display:flex;background:#242424;border-bottom:1px solid #141414;}
.launcher {width:36px;display:flex;align-items:center;justify-content:center;}
.launcher.wide {width:48px;margin-right:1px;}
.round {width:22px;height:22px;}
.tab {width:42px;margin-right:2px;height:36px;display:flex;align-items:center;justify-content:center;border-bottom:3px solid #5a5a5a;}
.tab.active {background:#3c3c3c;border-bottom-color:#3f6fe0;}
.tray {margin-left:auto;display:flex;align-items:center;padding-right:12px;color:#d8d8d8;}
.tray-item {width:34px;display:flex;justify-content:center;align-items:center;}
.tray-item.zh {font-weight:bold;font-size:16px;color:#fff;}
.caret {width:28px;}
.caret i {border:solid transparent;border-width:7px 6px 0;border-top-color:#ddd;}
.clock {width:188px;padding-left:6px;font-family:"Noto Sans",sans-serif;font-size:14.3px;white-space:nowrap;}
.clock small {font-size:10px;margin-left:3px;}
.notif {margin-left:3px;}

/* qemu title */
.qemubar {height:39px;flex:none;display:flex;align-items:center;background:#333;color:#d6d6d6;padding:0 8px 0 6px;}
.qemu-logo {width:29px;height:29px;flex:none;}
.qemu-title {margin-left:785px;font-family:"Noto Sans",sans-serif;font-size:17px;white-space:nowrap;}
.qemu-btns {margin-left:auto;display:flex;align-items:center;gap:19px;padding-right:4px;}

/* guest panel */
.guestbar {height:27px;flex:none;display:flex;align-items:center;background:#333;color:#d8d8d8;border-bottom:1px solid #1a1a1a;}
.apps {display:flex;align-items:center;gap:4px;padding-left:3px;font-size:17px;}
.grip {width:11px;display:flex;justify-content:center;}
.grip i {width:2px;height:10px;background:repeating-linear-gradient(#777 0 2px,transparent 2px 4px);}
.task {display:flex;align-items:center;gap:8px;width:200px;height:26px;padding-left:3px;background:#212121;border-radius:5px;white-space:nowrap;}
.pager {display:flex;margin-left:1078px;height:26px;}
.cell {width:46px;background:#252525;border-right:1px solid #333;}
.cell.current {background:#666;border:1px solid #eee;display:flex;align-items:center;justify-content:center;}
.gtray {margin-left:11px;}
.gclock {margin-left:11px;font-size:16.3px;white-space:nowrap;}
.guser {margin-left:14px;font-size:16.3px;}

/* desktop */
.desktop {flex:1;position:relative;padding:9px 0 0 52px;
	background:radial-gradient(ellipse 900px 500px at 45% 100%,#00a0d2 0%,rgba(0,160,210,0) 100%),
		linear-gradient(115deg,#053e56 0%,#03607f 35%,#006f96 65%,#0181ac 100%);}
.deskicon {position:absolute;color:#eee;font-size:16px;left:26px;}
.deskicon.first {top:80px;}
.deskicon.second {top:193px;}
.deskicon.third {top:308px;left:47px;}

.window {width:1814px;height:1012px;display:flex;flex-direction:column;background:#f6f5f4;border-radius:7px 7px 0 0;
	box-shadow:0 2px 14px rgba(0,0,0,.4);position:relative;border-left:1px solid #b0aeab;border-right:1px solid #b0aeab;border-bottom:1px solid #999;}
.titlebar {height:28px;flex:none;display:flex;align-items:center;background:#d6d2ce;border-radius:7px 7px 0 0;border-top:1px solid #eee;padding-left:6px;}
.title-icon {margin-top:-2px;}
.title-text {position:absolute;left:721px;top:5px;font-weight:bold;font-size:14.5px;color:#3a3f42;}
.title-btns {margin-left:auto;display:flex;align-items:center;gap:11px;padding-right:8px;}

.menubar {height:28px;flex:none;display:flex;align-items:center;padding:0 14px 0 4px;
	background:linear-gradient(#dcdad7,#dcdad7) left bottom/calc(100% - 27px) 2px no-repeat;}
.mitem {padding:0 8.4px;height:28px;line-height:28px;white-space:nowrap;}
.mitem.open-item {color:#1c71d8;border-bottom:3px solid #3584e4;}
.doc-close {margin-left:auto;}

/* toolbars */
.toolbar {height:39px;flex:none;display:flex;align-items:center;padding-left:7px;}
.tb {width:33px;height:33px;flex:none;display:flex;align-items:center;justify-content:center;border-radius:6px;}
.tb svg {width:24px;height:24px;}
.tb.on {background:#d6d2ce;}
.dd {width:12px;height:33px;flex:none;display:flex;align-items:center;justify-content:center;}
.dd::after {content:"";border:solid transparent;border-width:4px 3.5px 0;border-top-color:#111;margin-top:2px;}
.dd.off::after {border-top-color:#bbb;}
.sep {height:32px;flex:none;display:flex;justify-content:center;}
.sep::after {content:"";width:1px;background:#d9d7d4;}
.w6 {width:6px;}
.w7 {width:7px;}
.w8 {width:8px;}
.w12 {width:12px;}
.w14 {width:14px;}
.w16 {width:16px;}
.w17 {width:17px;}
.w18 {width:18px;}
.w20 {width:20px;}
.w26 {width:26px;}
.w28 {width:28px;}
.w29 {width:29px;}
.w30 {width:30px;}
.w31 {width:31px;}
.w32 {width:32px;}
.w34 {width:34px;}
.w36 {width:36px;}
.w38 {width:38px;}
.w40 {width:40px;}
.hidden-a {width:371px;flex:none;}
.hidden-b {width:367px;flex:none;}

/* main area */
.workspace {flex:1;min-height:0;display:flex;}
.slidepane {width:244px;flex:none;display:flex;flex-direction:column;}
.pane-head {margin:0;height:36px;font-size:16.8px;line-height:38px;padding-left:7px;color:#2e3436;}
.slidelist {flex:1;margin:0 0 3px 6px;background:#fff;border:1px solid #cdc7c2;border-right:1px solid #b9b7b4;box-shadow:inset -5px 0 0 #f6f5f4;padding:9px 0 0 8px;}
.thumb-row {position:relative;height:111px;width:210px;margin-bottom:12px;padding:3px 0 0 25px;}
.thumb-row b {position:absolute;left:7px;top:0;color:#777;font-size:16.8px;}
.thumb-row.selected {background:linear-gradient(#94b2d8,#a8c3e4);border:1px solid #5d83b0;padding:2px 0 0 24px;}
.thumb-row.selected b {color:#444;left:6px;top:1px;}
.thumb {width:170px;height:105px;background:#fff;border:1px solid #666;box-shadow:1px 1px 2px rgba(0,0,0,.4);position:relative;}
.handle {position:absolute;left:55px;top:50px;width:5px;height:5px;border:1px solid #444;border-radius:50%;}

.editor {width:1061px;flex:none;display:flex;flex-direction:column;}
.canvas {flex:1;min-height:0;padding:128px 0 0 21px;overflow:hidden;}
.slide {width:1022px;height:576px;position:relative;background:#fff;border:2px solid #7e7e7e;box-shadow:1px 1px 2px rgba(0,0,0,.2);}
.gridlayer {position:absolute;left:0;top:0;}
.titleframe {position:absolute;left:60px;top:16px;width:913px;height:107px;border:6px solid #c9def5;}
.slide-title {position:absolute;left:363px;top:38px;font:56.5px/64px "Liberation Sans",sans-serif;color:#000;white-space:nowrap;}
.caret-line {position:absolute;left:435px;top:38px;width:1px;height:63px;background:#000;}
.slide-body {position:absolute;left:425px;top:275px;font:41px/48px "Liberation Sans",sans-serif;color:#000;white-space:nowrap;}
.hscroll {height:14px;flex:none;margin-left:7px;background:#cdcdcd;padding-top:3px;}
.hthumb {display:block;margin-left:349px;width:357px;height:8px;border-radius:4px;background:#7f8384;}
.vscroll {width:14px;flex:none;background:#cdcdcd;margin-bottom:14px;padding:119px 0 0 3px;}
.vthumb {display:block;width:8px;height:598px;border-radius:4px;background:#7f8384;}

/* sidebar */
.sidebar {flex:1;min-width:0;display:flex;position:relative;border-left:1px solid #b9b7b4;}
.sash {position:absolute;left:0;top:387px;width:7px;height:73px;background:#8f9393;display:flex;align-items:center;justify-content:center;}
.sash i {border:solid transparent;border-width:4px 0 4px 5px;border-left-color:#eee;}
.deck {width:419px;margin-left:14px;flex:none;}
.deck-head {height:32px;display:flex;align-items:center;font-size:16.8px;margin-left:-4px;padding-bottom:5px;}
.grip-dots {width:8px;display:flex;flex-direction:column;gap:2px;}
.grip-dots i {display:block;width:2px;height:3px;background:#2e3436;}
.deck-head svg {margin-left:auto;margin-right:1px;margin-top:2px;}
.anim-list {height:403px;background:#fff;border:1px solid #cdc7c2;border-bottom-width:3px;display:flex;align-items:center;justify-content:center;text-align:center;}
.anim-list p {margin:0;line-height:20px;}
.rule {height:1px;background:#d5d2ce;margin-top:3px;}
.effects {margin:0;height:27px;line-height:20px;font-size:16.8px;}
.ctrl-row {display:flex;align-items:center;}
.ctrl-row label {width:82px;flex:none;text-align:right;color:#8f9292;margin-right:8px;}
.btn {height:33px;border:1px solid #cdc7c2;border-radius:5px;background:#f6f5f4;display:flex;align-items:center;justify-content:center;flex:none;}
.btn-row {padding-left:90px;gap:4px;height:33px;}
.btn.add {width:68px;background:linear-gradient(#f8f7f6,#edebe9);box-shadow:0 1px 2px rgba(0,0,0,.25);}
.plus {font-size:24px;font-weight:200;line-height:24px;margin-right:2px;}
.btn.small {width:35px;}
.minus {width:9px;height:1px;background:#999;}
.cat-row {height:33px;margin-top:9px;}
.combo {width:249px;height:33px;border:1px solid #cdc7c2;border-radius:5px;background:#faf9f8;display:flex;align-items:center;justify-content:flex-end;padding-right:12px;flex:none;}
.combo.full {width:329px;}
.combo i {border:solid transparent;border-width:6px 6px 0;border-top-color:#8f9292;}
.eff-row {height:102px;margin-top:7px;align-items:flex-start;}
.eff-row label {line-height:20px;}
.listbox {display:block;margin-left:2px;width:327px;height:102px;background:#faf9f8;border:1px solid #cdc7c2;}
.start-row {height:33px;margin-top:5px;}
.dir-row {height:33px;margin-top:4px;}
.dur-row {height:33px;margin-top:4px;}
.btn.opts {width:73px;margin-left:7px;background:#faf9f8;}
.spin {width:249px;height:33px;border:1px solid #cdc7c2;border-radius:5px;background:#faf9f8;display:flex;flex:none;}
.spin-val {flex:1;padding-left:9px;line-height:32px;color:#8f9292;}
.spin-btn {width:35px;border-left:1px solid #e4e2df;text-align:center;font-size:24px;line-height:28px;color:#d0cfcd;}
.foot-rule {margin-top:4px;}
.deck-foot {display:flex;align-items:center;height:32px;margin-top:4px;padding-left:4px;}
.tick {width:16px;height:16px;border-radius:3px;background:#3584e4;position:relative;flex:none;}
.tick::after {content:"";position:absolute;left:5px;top:1px;width:5px;height:10px;border:solid #fff;border-width:0 2.5px 2.5px 0;transform:rotate(45deg);}
.foot-label {margin-left:4px;}
.btn.playbtn {margin-left:auto;width:73px;height:32px;background:linear-gradient(#f8f7f6,#eeecea);gap:1px;}
.tabbar {width:36px;margin-left:10px;flex:none;display:flex;flex-direction:column;align-items:center;}
.tab-item {height:42px;width:36px;display:flex;align-items:center;justify-content:center;flex:none;}
.tab-item svg {width:22px;height:22px;}
.tab-item.current {height:34px;margin:3px 0 5px;background:#d6d2ce;border-radius:5px;}
.tab-item.burger {flex-direction:column;gap:3.5px;height:43.5px;padding-bottom:3px;}
.burger i {display:block;width:14px;height:2px;background:#2e3436;}

/* libreoffice status */
.statusbar {height:30px;flex:none;display:flex;align-items:center;font-size:15px;border-top:2px solid #b9b7b4;margin-right:5px;padding-bottom:2px;}
.st {height:23px;display:flex;align-items:center;border-right:1px solid #d9d7d4;white-space:nowrap;flex:none;}
.st1 {width:105px;padding-left:15px;}
.st2 {width:524px;padding-left:8px;}
.st3 {width:276px;padding-left:8px;}
.st4 {width:304px;padding-left:10px;}
.geo {width:148px;display:flex;align-items:center;gap:6px;}
.st5 {width:24px;justify-content:center;}
.st6 {width:29px;}
.st7 {width:326px;justify-content:center;}
.st8 {width:23px;justify-content:center;}
.st9 {width:143px;padding-left:8px;gap:4px;}
.st10 {border-right:none;padding-left:10px;}
.zm {font-weight:bold;font-size:16px;width:10px;text-align:center;}
.slider {width:98px;height:3px;background:#b5b3b0;position:relative;display:block;}
.knob {position:absolute;left:36px;top:-5px;width:5px;height:13px;border:1px solid #444;background:#e0dedb;border-radius:2px;}
.notch {position:absolute;left:48px;top:-3px;width:1px;height:9px;background:#777;}

/* bottom of the vm host */
.strip {height:14px;flex:none;display:flex;overflow:hidden;}
.strip-side {width:296px;background:#222;color:#777;font-size:12px;font-weight:bold;padding-left:73px;line-height:1;}
.timeline {display:block;margin-top:-8px;}
.strip-dark {width:883px;background:#111;}
.strip-teal {width:18px;background:#007f9c;}
.strip-shot {width:622px;background:#c9c8c5;position:relative;}
.shot-a {position:absolute;left:34px;top:-6px;width:125px;height:9px;border:1px solid #999;border-radius:2px;background:#d6d5d2;}
.shot-b {position:absolute;left:91px;top:-4px;width:350px;height:15px;border:1px solid #999;background:#cfcecb;}
.strip-end {flex:1;background:#111;}
.strip-tab {position:absolute;left:807px;top:1154px;width:306px;height:3px;background:#3a3a3a;}

.codebar {height:29px;flex:none;display:flex;align-items:center;justify-content:space-between;font-family:"Noto Sans",sans-serif;font-size:16px;color:#d0e2f0;
	background:linear-gradient(#00568f,#0078c6);}
.cb-left {display:flex;align-items:center;gap:5px;padding-left:22px;}
.cb-branch {margin-right:18px;}
.cb-sync {margin-right:18px;}
.cb-right {display:flex;align-items:center;padding-right:20px;}
.cb-ln {margin-right:24px;}
.cb-sp {margin-right:22px;}
.cb-enc {margin-right:23px;}
.cb-eol {margin-right:22px;}
.cb-lang {margin-right:24px;}

/* popup menus */
.menu {position:absolute;background:#fff;border:1px solid #c7c5c2;box-shadow:0 1px 5px rgba(0,0,0,.25);}
.viewmenu {left:152px;top:167px;width:364px;height:764px;}
.snapmenu {left:514px;top:562px;width:244px;height:199px;}
.menu hr {margin:0;border:0;height:1px;background:#e4e3e1;}
.row {height:28px;display:flex;align-items:center;padding-left:5px;padding-right:9px;white-space:nowrap;position:relative;}
.row em {margin-left:auto;font-style:normal;color:#929595;}
.row .sub {margin-left:auto;border:solid transparent;border-width:5.5px 0 5.5px 5px;border-left-color:#2e3436;margin-right:2px;}
.row.hot {background:#3584e4;color:#fff;}
.row.hot .sub {border-left-color:#fff;}
.viewmenu .row.hot {margin-right:1px;}
.radio, .check, .nomark {width:16px;height:16px;flex:none;margin-right:7px;position:relative;}
.radio {border:1.3px solid #2e3436;border-radius:50%;}
.radio.on::after {content:"";position:absolute;left:2.7px;top:2.7px;width:8px;height:8px;border-radius:50%;background:#2e3436;}
.check {border:1.3px solid #2e3436;border-radius:3px;}
.check.on::after {content:"";position:absolute;left:4px;top:.5px;width:5px;height:9px;border:solid #2e3436;border-width:0 2.5px 2.5px 0;transform:rotate(45deg);}
.row.hot .check {border-color:#fff;}
.pointer {position:absolute;left:542px;top:721px;}
```
